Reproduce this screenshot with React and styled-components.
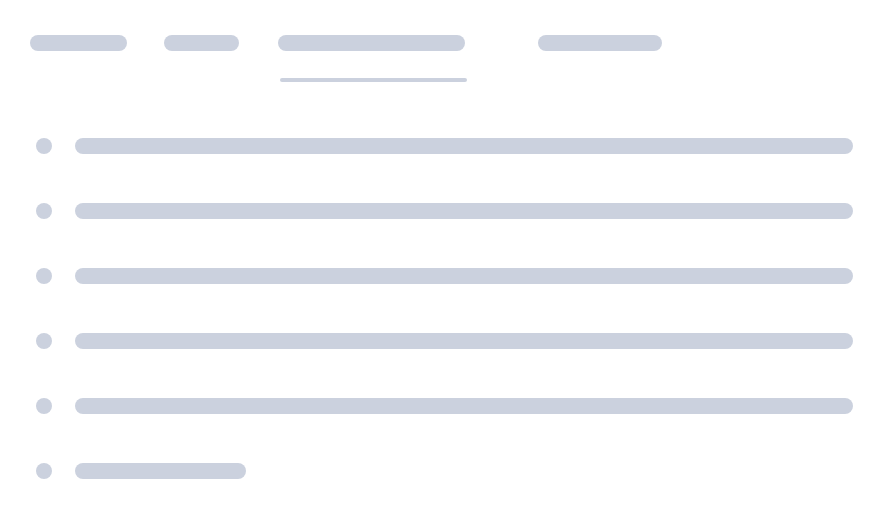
import styled, { createGlobalStyle } from 'styled-components';

const GlobalStyle = createGlobalStyle`
  html, body {
    margin: 0;
    padding: 0;
    background: #ffffff;
    font-family: 'Inter', 'Liberation Sans', sans-serif;
  }
`;

const SKELETON = '#cbd1de';

const Page = styled.div`
  width: 880px;
  height: 520px;
  box-sizing: border-box;
  padding: 35px 27px 0 30px;
  background: #ffffff;
  display: flex;
  flex-direction: column;
`;

const TabList = styled.div`
  display: flex;
  align-items: flex-start;
  height: 47px;
`;

const Tab = styled.div`
  width: ${({ $width }) => $width}px;
  flex-shrink: 0;
  display: flex;
  flex-direction: column;
`;

const TabLabel = styled.div`
  width: ${({ $width }) => $width}px;
  height: 16px;
  border-radius: 8px;
  background: ${SKELETON};
`;

const Underline = styled.div`
  width: ${({ $width }) => $width}px;
  height: 4px;
  margin: 27px 0 0 2px;
  border-radius: 2px;
  background: ${SKELETON};
`;

const List = styled.div`
  display: flex;
  flex-direction: column;
  gap: 49px;
  margin-top: 56px;
  padding-left: 6px;
`;

const Row = styled.div`
  display: flex;
  align-items: center;
  gap: 23px;
  height: 16px;
`;

const Dot = styled.div`
  width: 16px;
  height: 16px;
  border-radius: 50%;
  flex-shrink: 0;
  background: ${SKELETON};
`;

const Line = styled.div`
  height: 16px;
  border-radius: 8px;
  background: ${SKELETON};
  ${({ $width }) => ($width ? `width: ${$width}px;` : 'flex: 1;')}
`;

const tabs = [
  { slot: 134, label: 97 },
  { slot: 114, label: 75 },
  { slot: 260, label: 187, active: true },
  { slot: 124, label: 124 },
];

const rows = [null, null, null, null, null, 171];

export default function App() {
  return (
    <>
      <GlobalStyle />
      <Page>
        <TabList>
          {tabs.map((t, i) => (
            <Tab key={i} $width={t.slot}>
              <TabLabel $width={t.label} />
              {t.active && <Underline $width={t.label} />}
            </Tab>
          ))}
        </TabList>
        <List>
          {rows.map((w, i) => (
            <Row key={i}>
              <Dot />
              <Line $width={w} />
            </Row>
          ))}
        </List>
      </Page>
    </>
  );
}
